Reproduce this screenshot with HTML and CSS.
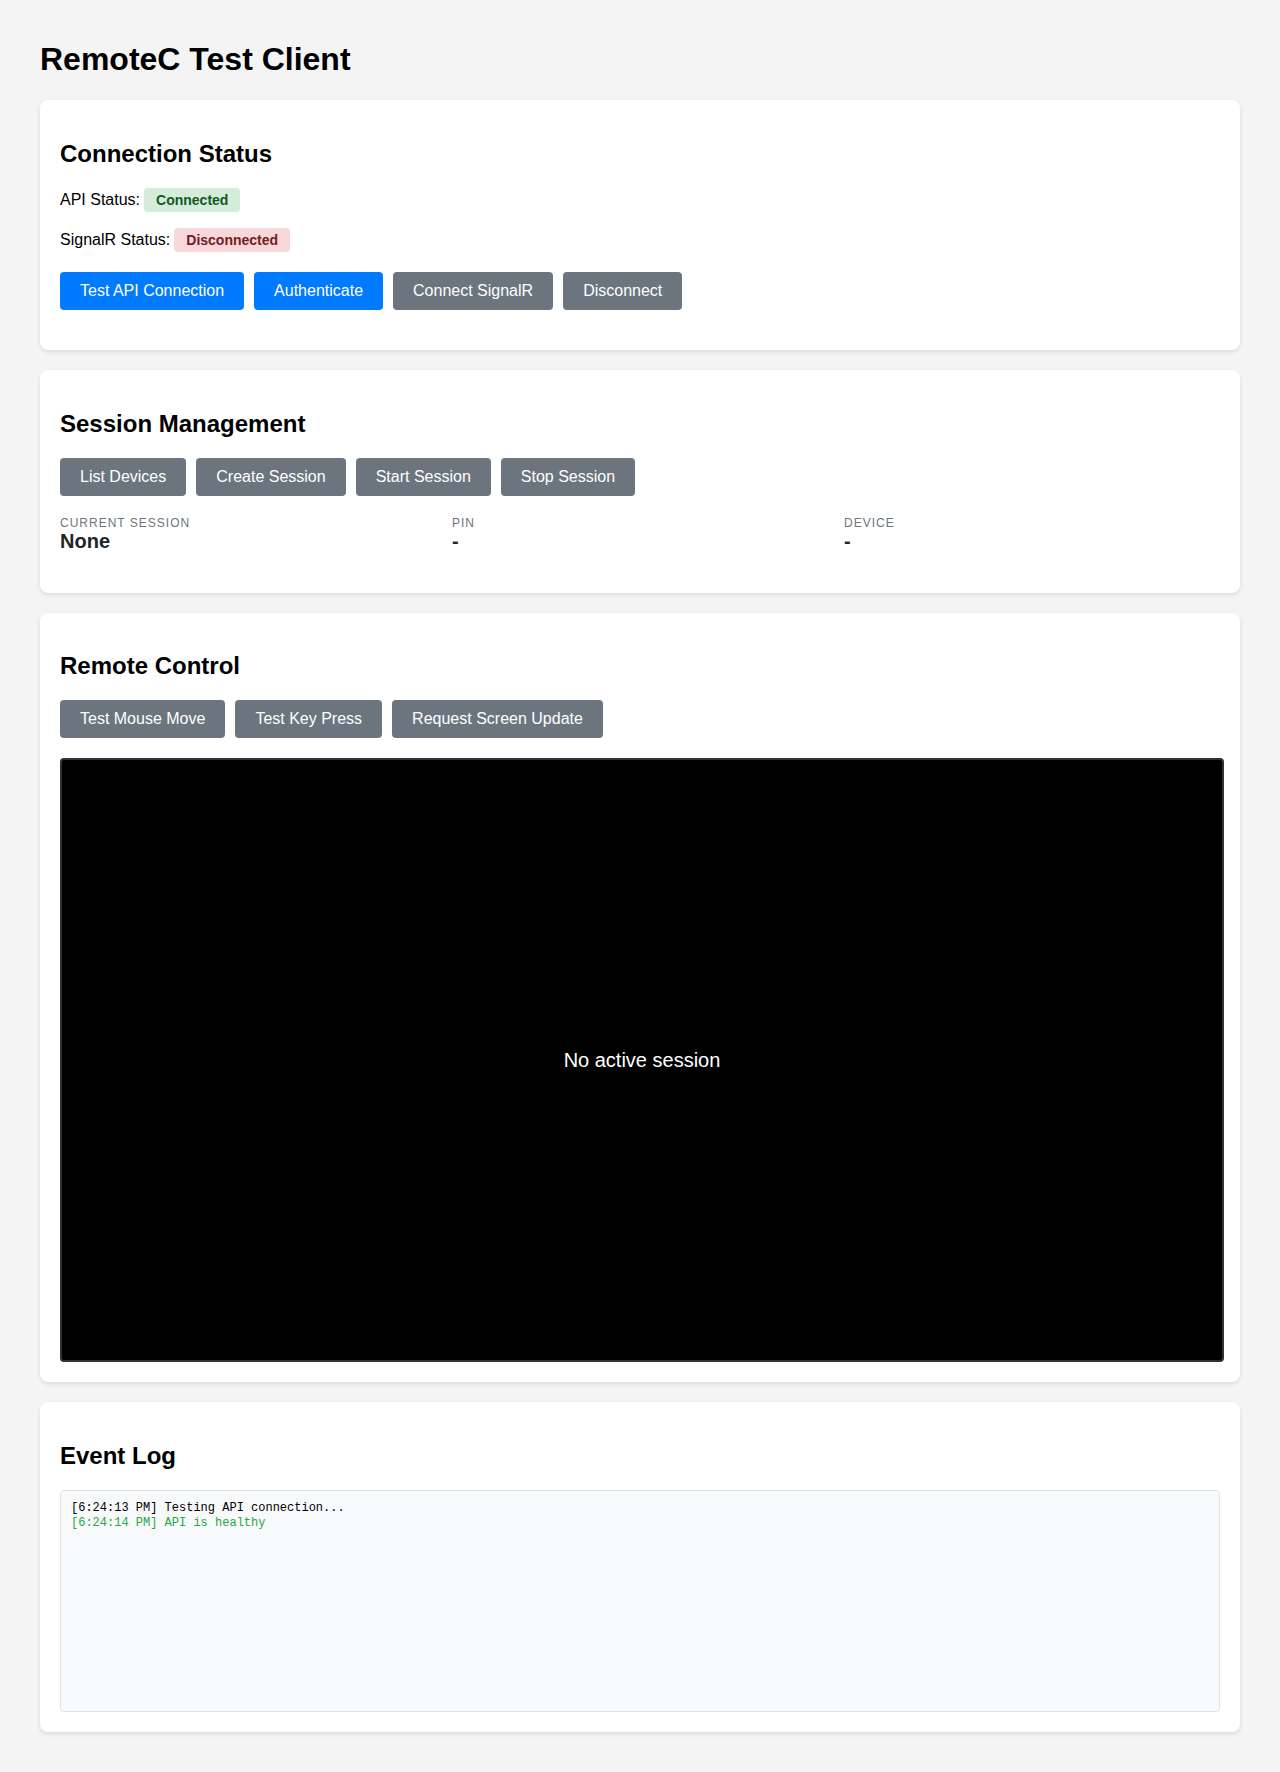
FILE: index.html
```html
<!DOCTYPE html>
<html lang="en">
<head>
<meta charset="utf-8">
<title>RemoteC Test Client</title>
<link rel="stylesheet" href="styles.css">
</head>
<body>
<div class="container">
  <h1 class="title">RemoteC Test Client</h1>

  <section class="card">
    <h2 class="card-title">Connection Status</h2>
    <div class="status-list">
      <div class="status-row">API Status: <span class="badge badge-ok">Connected</span></div>
      <div class="status-row">SignalR Status: <span class="badge badge-bad">Disconnected</span></div>
    </div>
    <div class="btn-row">
      <button class="btn btn-primary">Test API Connection</button>
      <button class="btn btn-primary">Authenticate</button>
      <button class="btn btn-secondary">Connect SignalR</button>
      <button class="btn btn-secondary">Disconnect</button>
    </div>
  </section>

  <section class="card">
    <h2 class="card-title">Session Management</h2>
    <div class="btn-row">
      <button class="btn btn-secondary">List Devices</button>
      <button class="btn btn-secondary">Create Session</button>
      <button class="btn btn-secondary">Start Session</button>
      <button class="btn btn-secondary">Stop Session</button>
    </div>
    <div class="info-grid">
      <div class="info-item">
        <div class="info-label">Current Session</div>
        <div class="info-value">None</div>
      </div>
      <div class="info-item">
        <div class="info-label">PIN</div>
        <div class="info-value">-</div>
      </div>
      <div class="info-item">
        <div class="info-label">Device</div>
        <div class="info-value">-</div>
      </div>
    </div>
  </section>

  <section class="card">
    <h2 class="card-title">Remote Control</h2>
    <div class="btn-row">
      <button class="btn btn-secondary">Test Mouse Move</button>
      <button class="btn btn-secondary">Test Key Press</button>
      <button class="btn btn-secondary">Request Screen Update</button>
    </div>
    <div class="screen">
      <span class="screen-msg">No active session</span>
    </div>
  </section>

  <section class="card">
    <h2 class="card-title">Event Log</h2>
    <div class="log">
      <div class="log-entry">[6:24:13 PM] Testing API connection...</div>
      <div class="log-entry log-success">[6:24:14 PM] API is healthy</div>
    </div>
  </section>
</div>
</body>
</html>
```

FILE: styles.css
```css
* {
  box-sizing: content-box;
}

body {
  margin: 0;
  padding: 20px;
  background: #f4f4f4;
  font-family: "Liberation Sans", Arial, sans-serif;
  color: #000;
}

.container {
  max-width: 1200px;
  margin: 0 auto;
}

.title {
  font-size: 32px;
  font-weight: bold;
  margin: 21.44px 0;
  color: #000;
}

.card {
  background: #fff;
  border-radius: 8px;
  box-shadow: 0 2px 4px rgba(0, 0, 0, 0.1);
  padding: 20px;
  margin-bottom: 20px;
}

.card-title {
  font-size: 24px;
  font-weight: bold;
  margin: 19.92px 0;
  color: #000;
}

.status-list {
  display: flex;
  flex-direction: column;
  gap: 16px;
}

.status-row {
  display: flex;
  align-items: center;
  gap: 4px;
  height: 24px;
  font-size: 16px;
}

.badge {
  display: inline-block;
  padding: 4px 12px;
  border-radius: 4px;
  font-size: 14px;
  font-weight: bold;
  line-height: 16px;
}

.badge-ok {
  background: #d4edda;
  color: #155724;
}

.badge-bad {
  background: #f8d7da;
  color: #721c24;
}

.btn-row {
  display: flex;
  gap: 10px;
  margin: 0 0 20px;
}

.status-list + .btn-row {
  margin-top: 20px;
}

.btn {
  font-family: "Liberation Sans", Arial, sans-serif;
  font-size: 16px;
  padding: 10px 20px;
  border: none;
  border-radius: 4px;
  color: #fff;
  cursor: pointer;
}

.btn-primary {
  background: #007bff;
}

.btn-secondary {
  background: #6c757d;
}

.info-grid {
  display: grid;
  grid-template-columns: repeat(3, 1fr);
  gap: 16px;
  margin-bottom: 20px;
}

.info-label {
  font-size: 12px;
  color: #6c757d;
  text-transform: uppercase;
  letter-spacing: 1px;
}

.info-value {
  font-size: 20px;
  font-weight: bold;
  color: #212529;
}

.screen {
  width: 100%;
  height: 600px;
  background: #000;
  border: 2px solid #333;
  border-radius: 4px;
  display: flex;
  align-items: center;
  justify-content: center;
}

.screen-msg {
  color: #fff;
  font-size: 20px;
}

.log {
  height: 200px;
  padding: 10px;
  background: #f8f9fa;
  border: 1px solid #dee2e6;
  border-radius: 4px;
  overflow-y: auto;
  font-family: "Liberation Mono", "Courier New", monospace;
  font-size: 12px;
}

.log-entry {
  margin-bottom: 1px;
  color: #000;
}

.log-success {
  color: #28a745;
}
```
